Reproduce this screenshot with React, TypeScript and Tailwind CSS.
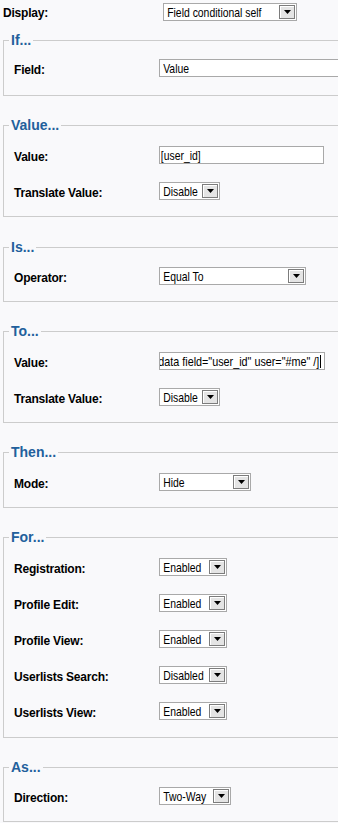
import React from 'react';

const fieldText = 'whitespace-nowrap text-[13px] leading-[15px] text-black';

function Arrow() {
  return (
    <span className="mr-px flex h-[14px] w-[16px] shrink-0 items-center justify-center border border-[#7c7c7c] bg-[#e4e4e4] shadow-[inset_1px_1px_0_#ffffff]">
      <svg width="7" height="4" viewBox="0 0 7 4">
        <path d="M0 0h7L3.5 4z" fill="#000000" />
      </svg>
    </span>
  );
}

function Select({ value, w }: { value: string; w: string }) {
  return (
    <div className={`flex h-[18px] shrink-0 items-center border border-[#a9a9a9] bg-white ${w}`}>
      <span className={`min-w-0 flex-1 origin-left scale-x-[0.8] pl-[4px] ${fieldText}`}>{value}</span>
      <Arrow />
    </div>
  );
}

function TextBox({ children, w }: { children: React.ReactNode; w: string }) {
  return (
    <div className={`flex h-[18px] shrink-0 items-center overflow-hidden border border-[#a9a9a9] bg-white ${w}`}>
      {children}
    </div>
  );
}

function Row({ label, children }: { label: string; children: React.ReactNode }) {
  return (
    <div className="flex h-[36px] items-center">
      <span className="w-[145px] shrink-0 pt-[3px] text-[12px] font-bold tracking-[-0.2px] text-black">{label}</span>
      {children}
    </div>
  );
}

function Section({ title, spacing, children }: { title: string; spacing: string; children: React.ReactNode }) {
  return (
    <fieldset className={`w-[400px] border border-[#cccccc] pl-[10px] ${spacing}`}>
      <legend className="-ml-[5px] px-[2px] text-[14px] font-bold leading-[16px] text-[#22609c]">{title}</legend>
      {children}
    </fieldset>
  );
}

export default function App() {
  return (
    <div className="h-[823px] w-[338px] overflow-hidden bg-[#f9f9fb] pl-[3px] pt-[3px] font-['Liberation_Sans',Arial,sans-serif]">
      <div className="flex h-[18px] items-center">
        <span className="w-[160px] shrink-0 pt-[1px] text-[12px] font-bold tracking-[-0.2px] text-black">Display:</span>
        <Select value="Field conditional self" w="w-[134px]" />
      </div>

      <Section title="If..." spacing="mt-[11px] pt-[2px] pb-[9px]">
        <Row label="Field:">
          <Select value="Value" w="w-[220px]" />
        </Row>
      </Section>

      <Section title="Value..." spacing="mt-[21px] pt-[4px] pb-[7px]">
        <Row label="Value:">
          <TextBox w="w-[165px]">
            <span className={`origin-left scale-x-[0.8] pl-px ${fieldText}`}>[user_id]</span>
          </TextBox>
        </Row>
        <Row label="Translate Value:">
          <Select value="Disable" w="w-[61px]" />
        </Row>
      </Section>

      <Section title="Is..." spacing="mt-[22px] pt-[3px] pb-[7px]">
        <Row label="Operator:">
          <Select value="Equal To" w="w-[147px]" />
        </Row>
      </Section>

      <Section title="To..." spacing="mt-[21px] pt-[4px] pb-[7px]">
        <Row label="Value:">
          <TextBox w="w-[166px] justify-end pr-[3px]">
            <span className={`shrink-0 origin-right scale-x-[0.83] ${fieldText}`}>[cb:userdata field="user_id" user="#me" /]</span>
            <span className="ml-px h-[13px] w-px shrink-0 bg-black" />
          </TextBox>
        </Row>
        <Row label="Translate Value:">
          <Select value="Disable" w="w-[61px]" />
        </Row>
      </Section>

      <Section title="Then..." spacing="mt-[21px] pt-[4px] pb-[7px]">
        <Row label="Mode:">
          <Select value="Hide" w="w-[92px]" />
        </Row>
      </Section>

      <Section title="For..." spacing="mt-[21px] pt-[4px] pb-[8px]">
        <Row label="Registration:">
          <Select value="Enabled" w="w-[68px]" />
        </Row>
        <Row label="Profile Edit:">
          <Select value="Enabled" w="w-[68px]" />
        </Row>
        <Row label="Profile View:">
          <Select value="Enabled" w="w-[68px]" />
        </Row>
        <Row label="Userlists Search:">
          <Select value="Disabled" w="w-[68px]" />
        </Row>
        <Row label="Userlists View:">
          <Select value="Enabled" w="w-[68px]" />
        </Row>
      </Section>

      <Section title="As..." spacing="mt-[21px] pt-[3px] pb-[7px]">
        <Row label="Direction:">
          <Select value="Two-Way" w="w-[72px]" />
        </Row>
      </Section>
    </div>
  );
}
